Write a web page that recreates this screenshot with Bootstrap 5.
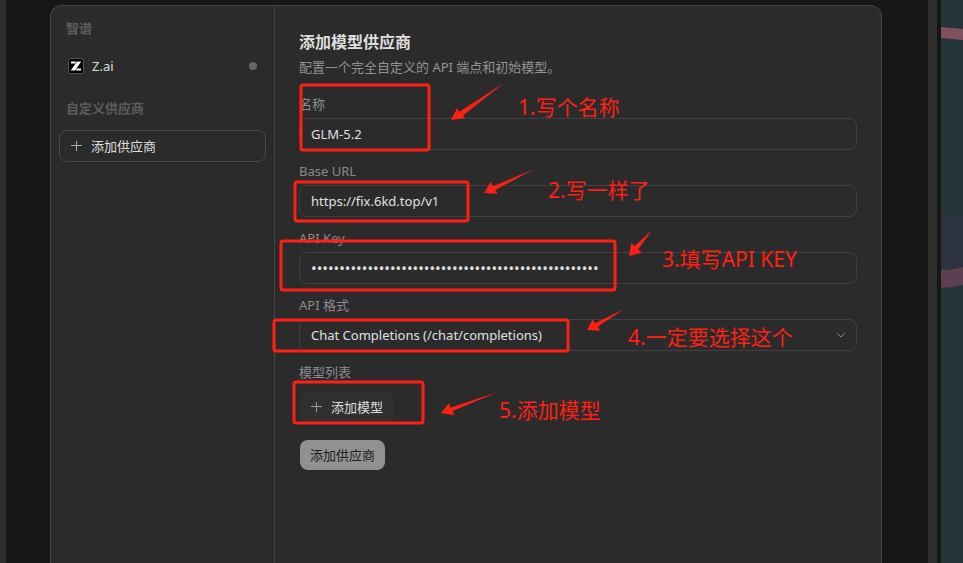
<!DOCTYPE html>
<html lang="zh-CN" data-bs-theme="dark">
<head>
<meta charset="utf-8">
<meta name="viewport" content="width=device-width, initial-scale=1">
<title>添加模型供应商</title>
<link href="https://cdn.jsdelivr.net/npm/bootstrap@5.3.0/dist/css/bootstrap.min.css" rel="stylesheet">
<style>
  body { font-family: "Noto Sans", "Noto Sans CJK SC", sans-serif; font-size: 13px; line-height: 20px; background: #171717; color: #dedede; }
  .edge-left { width: 6px; background: #2d2d2d; }
  .edge-right { width: 13px; background: #2d2d2d; border-right: 4px solid #171717; }
  .backdrop { width: 22px; background: #243439; }
  .stage { padding: 5px 46px 0 44px; }
  .panel { background: #2b2b2b; border: 1px solid #444; border-bottom: 0; border-radius: 12px 12px 0 0; }
  .side { width: 224px; padding: 12px 8px; border-right: 1px solid #444; }
  .side-title { font-size: 13px; line-height: 20px; font-weight: 700; color: #5c5c5c; padding: 0 7px; }
  .side-item { height: 32px; padding: 0 9px; margin: 12px 0 16px; color: #dedede; }
  .status-dot { width: 8px; height: 8px; background: #666; }
  .line-btn { height: 32px; font-size: 13px; line-height: 20px; border: 1px solid #4a4a4a; border-radius: 8px; padding: 0 11px; margin-top: 12px; color: #dedede; }
  .form-pane { padding: 24px; }
  .pane-title { font-size: 16px; line-height: 24px; color: #dedede; }
  .hint { color: #929292; margin: 3px 0 17px; }
  .field { margin-bottom: 11px; }
  .field label, .list-title { display: block; color: #8c8c8c; margin-bottom: 4px; }
  .field .form-control, .field .form-select { height: 32px; font-size: 13px; line-height: 20px; padding: 5px 11px; background-color: transparent; border: 1px solid #404040; border-radius: 8px; color: #e0e0e0; }
  .field .form-select { background-image: url("data:image/svg+xml,%3Csvg xmlns='http://www.w3.org/2000/svg' viewBox='0 0 12 12'%3E%3Cpath d='M2 4l4 4 4-4' fill='none' stroke='%23858585'/%3E%3C/svg%3E"); background-size: 12px 12px; background-position: right 9px center; }
  .field .secret { font-size: 15px; }
  .soft-btn, .main-btn { height: 30px; font-size: 13px; line-height: 20px; border: 0; border-radius: 8px; }
  .soft-btn { background: #303030; color: #dedede; padding: 0 11px; margin: 10px 0 18px 1px; }
  .main-btn { background: #919191; color: #1d1d1d; padding: 0 10px; margin-left: 1px; }
  .notes { pointer-events: none; }
  .notes text { font-size: 21px; }
</style>
<script src="https://cdn.jsdelivr.net/npm/bootstrap@5.3.0/dist/js/bootstrap.bundle.min.js"></script>
</head>
<body>
<div class="d-flex vh-100 position-relative overflow-hidden">
  <div class="edge-left flex-shrink-0"></div>
  <div class="stage flex-grow-1 d-flex">
    <div class="panel flex-grow-1 d-flex">
      <aside class="side flex-shrink-0">
        <h2 class="side-title mb-0">智谱</h2>
        <a href="#" class="side-item d-flex align-items-center text-decoration-none">
          <svg width="16" height="16" viewBox="0 0 16 16" aria-hidden="true"><rect x=".5" y=".5" width="15" height="15" rx="2" fill="#000" stroke="#555"/><path d="M3 3.500h5.200L7 5.600H3zM9 3.500h4.200L7 12.500H2.800zM9 10.400h4v2.100H7.700z" fill="#fff"/></svg>
          <span class="ms-2 flex-grow-1">Z.ai</span>
          <span class="status-dot rounded-circle"></span>
        </a>
        <h2 class="side-title mb-0">自定义供应商</h2>
        <button type="button" class="line-btn btn w-100 d-flex align-items-center">
          <svg width="12" height="12" viewBox="0 0 12 12" aria-hidden="true"><path d="M5.500 1v10M0 5.500h11" stroke="#aaa"/></svg>
          <span class="ms-2">添加供应商</span>
        </button>
      </aside>
      <main class="form-pane flex-grow-1">
        <h1 class="pane-title fw-bold mb-0">添加模型供应商</h1>
        <p class="hint">配置一个完全自定义的 API 端点和初始模型。</p>
        <form>
          <div class="field"><label for="name">名称</label><input id="name" class="form-control" type="text" value="GLM-5.2"></div>
          <div class="field"><label for="url">Base URL</label><input id="url" class="form-control" type="text" value="https://fix.6kd.top/v1"></div>
          <div class="field"><label for="key">API Key</label><input id="key" class="form-control secret" type="password" autocomplete="off" value="000000000000000000000000000000000000000000000000000"></div>
          <div class="field"><label for="fmt">API 格式</label><select id="fmt" class="form-select"><option>Chat Completions (/chat/completions)</option></select></div>
          <div class="list-title">模型列表</div>
          <button type="button" class="soft-btn btn d-flex align-items-center">
            <svg width="12" height="12" viewBox="0 0 12 12" aria-hidden="true"><path d="M5.500 1v10M0 5.500h11" stroke="#999"/></svg>
            <span class="ms-2">添加模型</span>
          </button>
          <button type="submit" class="main-btn btn">添加供应商</button>
        </form>
      </main>
    </div>
  </div>
  <div class="edge-right flex-shrink-0"></div>
  <div class="backdrop flex-shrink-0">
    <svg width="22" height="300" viewBox="0 0 22 300" class="d-block" aria-hidden="true">
      <path d="M0 27l22 2v11L0 38z" fill="#80515c"/>
      <path d="M0 216h22v56H0z" fill="#2c333e"/>
      <path d="M0 270q12 0 22-3v18q-11 3-22 2.500z" fill="#5b4150"/>
    </svg>
  </div>

  <svg class="notes position-absolute top-0 start-0 w-100 h-100" aria-label="填写步骤">
    <g fill="none" stroke="#ff2013" stroke-width="3">
      <rect x="301" y="85" width="128" height="65" rx="2"/>
      <rect x="295" y="182" width="173" height="39" rx="2"/>
      <rect x="281" y="241" width="334" height="49" rx="2"/>
      <rect x="274" y="320" width="294" height="31" rx="2"/>
      <rect x="294" y="382" width="129" height="41" rx="2"/>
    </g>
    <g fill="#ff2013">
      <path d="M451 120l6.300-12.300 1.700 4.300L504 83l-41 32.500 2 2.500z"/>
      <path d="M484 193l6.700-11 2 4.500L534 169l-38.500 21 2 3.700z"/>
      <path d="M629 256l2.300-13.300 3.200 3.500L652 230l-14 19.500 4 3z"/>
      <path d="M587 330l5.700-10.700 2.300 4L624 309l-26 17.500 2 4.200z"/>
      <path d="M441 413l8.300-10.300.9 5L498 392l-45.500 19 2.200 4.300z"/>
      <text x="518" y="115">1.写个名称</text>
      <text x="548" y="198">2.写一样了</text>
      <text x="662" y="267">3.填写API KEY</text>
      <text x="628" y="345">4.一定要选择这个</text>
      <text x="499" y="418">5.添加模型</text>
    </g>
  </svg>
</div>
</body>
</html>
